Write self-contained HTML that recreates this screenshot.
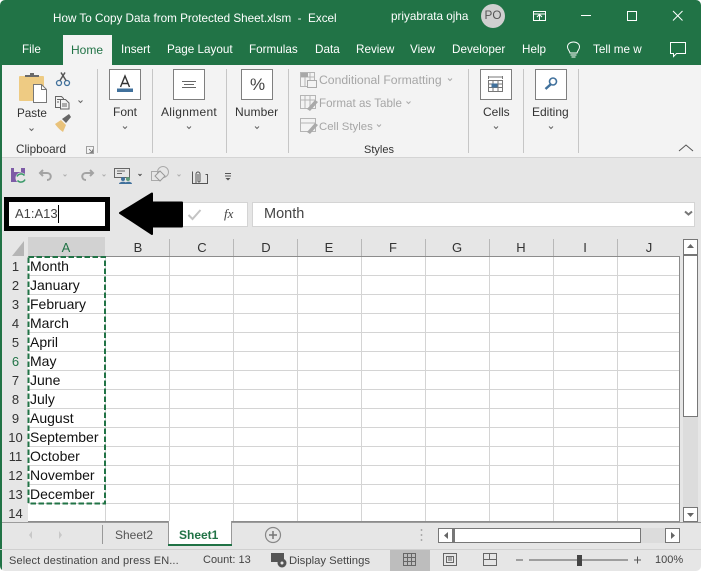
<!DOCTYPE html>
<html><head><meta charset="utf-8"><style>
html,body{margin:0;padding:0;background:#fff}
#p{position:relative;width:701px;height:571px;overflow:hidden;background:#e6e6e6;font-family:"Liberation Sans",sans-serif;color:#333}
#p div{position:absolute}
.t{position:absolute;white-space:nowrap;line-height:16px;font-size:11.7px}
.w{color:#fff}.g{color:#a6a6a6}
.c{text-align:center;transform:translateX(-50%)}
.box{background:#fff;border:1px solid #7f7f7f;box-sizing:border-box;width:32px;height:31px}
.sep{background:#c6c6c6;width:1px;top:69px;height:84px}
svg{position:absolute;overflow:visible}
.r{left:4px;width:23px;text-align:center;font-size:13px;color:#333;line-height:19px}
.n{left:30px;font-size:14px;color:#111;line-height:19px}
.h{font-size:13px;line-height:19px;color:#333;top:238px}
</style></head><body><div id="p">
<div style="left:0;top:0;width:701px;height:65px;background:#217346"></div>
<div style="left:0;top:65px;width:701px;height:92px;background:#f3f3f3"></div>
<div style="left:0;top:157px;width:701px;height:1px;background:#d4d4d4"></div>
<div style="left:0;top:0;width:2px;height:571px;background:#217346"></div>
<div style="left:63px;top:35px;width:49px;height:31px;background:#f3f3f3"></div>

<span class="t w" style="left:53px;top:11px">How To Copy Data from Protected Sheet.xlsm&nbsp; -&nbsp; Excel</span>
<span class="t w" style="left:391px;top:9px">priyabrata ojha</span>
<div style="left:481px;top:4px;width:24px;height:24px;border-radius:50%;background:#d0d0d0"></div>
<span class="t c" style="left:493px;top:8px;color:#555">PO</span>
<svg style="left:0;top:0" width="701" height="65" fill="none" stroke="#fff" stroke-width="1">
<path d="M533.500 11.500h12v9h-12zM533.500 14h12M539.500 20v-5M537 17l2.500-2.500 2.500 2.500"/>
<path d="M581 15.500h10"/><path d="M627.500 11.500h9v9h-9z"/><path d="M673 11l9.500 9.500M682.500 11L673 20.500"/>
<path d="M567.500 47c0-3 2.500-5 6-5s6 2 6 5c0 2.500-2 3.500-2.500 6h-7c-.5-2.500-2.500-3.500-2.500-6zM570.500 55h6M571.500 57h4"/>
<path d="M670.500 42.500h15v11h-9l-3 3v-3h-3z"/>
</svg>
<span class="t w" style="left:22px;top:42px">File</span>
<span class="t" style="left:71px;top:42px;color:#217346;font-size:12px">Home</span>
<span class="t w" style="left:121px;top:42px">Insert</span>
<span class="t w" style="left:167px;top:42px">Page Layout</span>
<span class="t w" style="left:249px;top:42px">Formulas</span>
<span class="t w" style="left:315px;top:42px">Data</span>
<span class="t w" style="left:356px;top:42px">Review</span>
<span class="t w" style="left:410px;top:42px">View</span>
<span class="t w" style="left:452px;top:42px">Developer</span>
<span class="t w" style="left:522px;top:42px">Help</span>
<span class="t w" style="left:593px;top:42px">Tell me w</span>

<div class="sep" style="left:97px"></div><div class="sep" style="left:152px"></div><div class="sep" style="left:226px"></div><div class="sep" style="left:288px"></div><div class="sep" style="left:468px"></div><div class="sep" style="left:523px"></div><div class="sep" style="left:578px"></div>
<div class="box" style="left:109px;top:69px"></div><div class="box" style="left:173px;top:69px"></div><div class="box" style="left:241px;top:69px"></div><div class="box" style="left:480px;top:69px"></div><div class="box" style="left:535px;top:69px"></div>

<svg style="left:0;top:0" width="701" height="160" fill="none">
<!-- paste -->
<rect x="19" y="76" width="25" height="25" rx="1" fill="#eecb83"/>
<path d="M25 77v-2h5v-2h4v2h5v2z" fill="#6a6a6a"/>
<path d="M33.500 84.500h8l5 5v13h-13z" fill="#fff" stroke="#777"/>
<path d="M41.500 84.500v5h5" stroke="#777"/>
<!-- scissors -->
<circle cx="59" cy="83" r="2.500" stroke="#41719c" stroke-width="1.300"/><circle cx="67" cy="83" r="2.500" stroke="#41719c" stroke-width="1.300"/>
<path d="M60 80.500l5-8M66 80.500l-5-8" stroke="#555" stroke-width="1.500"/>
<!-- copy -->
<path d="M55.500 96.500h6l2 2v9h-8z" stroke="#666" fill="#f3f3f3"/>
<path d="M60.500 99.500h5l3.500 3.500v6h-8.500z" stroke="#666" fill="#f3f3f3"/>
<path d="M57 99.500h3M57 102h2M62 104h5M62 106h5" stroke="#666"/>
<path d="M78.500 100.500l2 2 2-2M29.500 128.500l2 2 2-2M123 126.500l2 2 2-2M187 126.500l2 2 2-2M255 126.500l2 2 2-2M494 126.500l2 2 2-2M549 126.500l2 2 2-2" stroke="#666"/>
<!-- brush -->
<path d="M55 124l6-4 5 5-3 7c-3-2-6-5-8-8z" fill="#e9c27a"/><path d="M62 119l7-5 2 3-5 6z" fill="#666"/>
<!-- launcher -->
<path d="M86.500 146.500h7v7h-7z" stroke="#888" stroke-width=".8"/><path d="M89 149l3.500 3.500M92.500 149.500v3h-3" stroke="#666" stroke-width=".8"/>
<!-- font A -->
<path d="M117 88.500h16v3.500h-16z" fill="#41719c"/>
<path d="M120.500 87l4.500-11 4.500 11M122 83.500h6" stroke="#333" stroke-width="1.400"/>
<!-- alignment -->
<path d="M182 81.500h14M184 84.500h10M182 87.500h14" stroke="#666"/>
<!-- cells -->
<path d="M488.500 80.500h14v11h-14zM488.500 84h14M488.500 87.500h14M493 80.500v11M498 80.500v11M488.500 77h14M488.500 76v3M502.500 76v3" stroke="#777"/>
<rect x="491.500" y="83.500" width="6" height="4" fill="#41719c"/>
<!-- magnifier -->
<circle cx="553" cy="81.500" r="3.500" stroke="#41719c" stroke-width="1.600"/>
<path d="M550.500 84.500l-5 4.500" stroke="#41719c" stroke-width="2.500"/>
<!-- styles -->
<g stroke="#b5b5b5"><path d="M300.500 72.500h14v14h-14zM300.500 77h14M305 72.500v14M310 72.500v14"/><path d="M300.500 95.500h15v13h-15zM300.500 100h15M305 95.500v13M310 95.500v13"/><path d="M300.500 118.500h15v13h-15zM300.500 123h15"/></g>
<rect x="301" y="73" width="7" height="4" fill="#a8a8a8"/><rect x="307.500" y="80.500" width="9" height="7" fill="#f3f3f3" stroke="#aaa"/>
<path d="M307 109l8-9 3 2-8 9zM307 132l8-9 3 2-8 9z" fill="#aaa"/>
<path d="M448 78.500l2 2 2-2M406.500 101.500l2 2 2-2M377 124.500l2 2 2-2" stroke="#aaa"/>
<path d="M679 151l7-6 7 6" stroke="#555"/>
<!-- QAT -->
<rect x="11" y="168" width="14" height="14" fill="#7d5ba6"/><rect x="14" y="168" width="7" height="4" fill="#e6e6e6"/>
<circle cx="21" cy="178" r="5.500" fill="#e6e6e6"/><path d="M17 176.500a4.500 4.500 0 0 1 7.500-1M25 179.500a4.500 4.500 0 0 1-7.500 1" stroke="#3c9a6a" stroke-width="1.500"/>
<path d="M43 170l-3 3 3 3M40 173h7c5 0 5 7 0 7" stroke="#a3a3a3" stroke-width="2"/>
<path d="M90 170l3 3-3 3M93 173h-7c-5 0-5 7 0 7" stroke="#a3a3a3" stroke-width="2"/>
<path d="M63.500 174.500l1.500 1.500 1.500-1.500M102.500 174.500l1.500 1.500 1.500-1.500M177.500 174.500l1.500 1.500 1.500-1.500" stroke="#b0b0b0"/>
<path d="M138.500 174l1.500 1.500 1.500-1.500" stroke="#444"/>
<path d="M114.500 168.500h15v9h-15zM117 171h8M117 173.500h5" stroke="#666"/>
<circle cx="123" cy="179" r="2" fill="#41719c"/><circle cx="128" cy="179" r="2" fill="#5c9a78"/><path d="M119 184c0-3 8-3 8 0zM125 184c0-3 7-3 7 0z" fill="#41719c"/>
<path d="M151.500 171.500h9v9h-9z" stroke="#aaa"/><circle cx="163" cy="172" r="5.500" stroke="#aaa"/><path d="M160 171l5 5-5 5-5-5z" fill="#e6e6e6" stroke="#999"/>
<path d="M192.500 171.500v12h15v-9h-2M196 183v-9a2 2 0 0 1 4 0v7a1 1 0 0 1-2 0v-7" stroke="#555"/>
<path d="M225 173.500h6M225 176h6" stroke="#555"/><path d="M225.500 178l2.500 2.500 2.500-2.500z" fill="#555"/>
</svg>

<span class="t" style="left:17px;top:106px">Paste</span>
<span class="t" style="left:16px;top:142px">Clipboard</span>
<span class="t" style="left:113px;top:104px;font-size:12px">Font</span>
<span class="t" style="left:161px;top:104px;font-size:12px;letter-spacing:.3px">Alignment</span>
<span class="t" style="left:235px;top:104px;font-size:12px;letter-spacing:.1px">Number</span>
<span class="t" style="left:483px;top:104px;font-size:12px">Cells</span>
<span class="t" style="left:532px;top:104px;font-size:12px">Editing</span>
<span class="t" style="left:364px;top:142px;font-size:11px">Styles</span>
<span class="t" style="left:250px;top:76px;font-size:17px;line-height:18px;color:#444">%</span>
<span class="t g" style="left:319px;top:72px;font-size:12.2px">Conditional Formatting</span>
<span class="t g" style="left:319px;top:96px;font-size:11.6px">Format as Table</span>
<span class="t g" style="left:319px;top:119px;font-size:11.4px">Cell Styles</span>

<!-- formula bar -->
<div style="left:4px;top:197px;width:106px;height:34px;background:#000"></div>
<div style="left:9px;top:202px;width:96px;height:24px;background:#fff"></div>
<span class="t" style="left:15px;top:206px;font-size:13px;color:#444">A1:A13</span>
<div style="left:58px;top:205px;width:1px;height:18px;background:#000"></div>
<div style="left:150px;top:202px;width:98px;height:25px;background:#fff;border:1px solid #d4d4d4;box-sizing:border-box"></div>
<div style="left:252px;top:202px;width:443px;height:25px;background:#fff;border:1px solid #d4d4d4;box-sizing:border-box"></div>
<span class="t" style="left:264px;top:206px;font-size:14.500px;color:#444">Month</span>
<span class="t" style="left:224px;top:206px;font-family:'Liberation Serif',serif;font-style:italic;font-size:13px;color:#444">fx</span>
<svg style="left:0;top:190px" width="701" height="50" fill="none">
<path d="M120 23L152 3.500v9h30v24h-30v7.500z" fill="#000" stroke="#000" stroke-width="2" stroke-linejoin="round"/>
<path d="M188.500 25l4 4 8-9" stroke="#c4c4c4" stroke-width="2"/>
<path d="M685 21.500l3.500 3 3.500-3" stroke="#777" stroke-width="2"/>
</svg>

<!-- headers -->
<div style="left:28px;top:237px;width:77px;height:19px;background:#d2d2d2"></div>
<div style="left:4px;top:256px;width:24px;height:266px;background:#e6e6e6"></div>
<svg style="left:0;top:237px" width="701" height="290" fill="none">
<path d="M24 4v15H12z" fill="#b5b5b5"/>
<rect x="28" y="19.500" width="652" height="265" fill="#fff"/>
<path d="M105.500 20v265M169.500 20v265M233.500 20v265M297.500 20v265M361.500 20v265M425.500 20v265M489.500 20v265M553.500 20v265M617.500 20v265" stroke="#d4d4d4"/>
<path d="M28 38.500h652M28 57.500h652M28 76.500h652M28 95.500h652M28 114.500h652M28 133.500h652M28 152.500h652M28 171.500h652M28 190.500h652M28 209.500h652M28 228.500h652M28 247.500h652M28 266.500h652" stroke="#d4d4d4"/>
<path d="M169.500 2v17M233.500 2v17M297.500 2v17M361.500 2v17M425.500 2v17M489.500 2v17M553.500 2v17M617.500 2v17" stroke="#b8b8b8"/>
<path d="M28 19.500h652M679.500 19v266M28 284.500h652" stroke="#8c8c8c"/>
<path d="M28.500 20h76.500v246.500h-76.500z" stroke="#217346" stroke-width="2" stroke-dasharray="5.500 2.500"/>
</svg>
<span class="t h c" style="left:66px;color:#217346">A</span><span class="t h c" style="left:138px">B</span><span class="t h c" style="left:202px">C</span><span class="t h c" style="left:266px">D</span><span class="t h c" style="left:329px">E</span><span class="t h c" style="left:393px">F</span><span class="t h c" style="left:457px">G</span><span class="t h c" style="left:521px">H</span><span class="t h c" style="left:585px">I</span><span class="t h c" style="left:649px">J</span>

<span class="t r" style="top:257px">1</span><span class="t r" style="top:276px">2</span><span class="t r" style="top:295px">3</span><span class="t r" style="top:314px">4</span><span class="t r" style="top:333px">5</span><span class="t r" style="top:352px;color:#217346">6</span><span class="t r" style="top:371px">7</span><span class="t r" style="top:390px">8</span><span class="t r" style="top:409px">9</span><span class="t r" style="top:428px">10</span><span class="t r" style="top:447px">11</span><span class="t r" style="top:466px">12</span><span class="t r" style="top:485px">13</span><span class="t r" style="top:504px">14</span>
<span class="t n" style="top:257px">Month</span><span class="t n" style="top:276px">January</span><span class="t n" style="top:295px">February</span><span class="t n" style="top:314px">March</span><span class="t n" style="top:333px">April</span><span class="t n" style="top:352px">May</span><span class="t n" style="top:371px">June</span><span class="t n" style="top:390px">July</span><span class="t n" style="top:409px">August</span><span class="t n" style="top:428px">September</span><span class="t n" style="top:447px">October</span><span class="t n" style="top:466px">November</span><span class="t n" style="top:485px">December</span>

<!-- vertical scrollbar -->
<div style="left:683px;top:239px;width:15px;height:283px;background:#dcdcdc"></div>
<div style="left:683px;top:239px;width:15px;height:16px;background:#fff;border:1px solid #777;box-sizing:border-box"></div>
<div style="left:683px;top:255px;width:15px;height:162px;background:#fff;border:1px solid #777;box-sizing:border-box"></div>
<div style="left:683px;top:507px;width:15px;height:15px;background:#fff;border:1px solid #777;box-sizing:border-box"></div>
<svg style="left:0;top:0" width="701" height="571" fill="none">
<path d="M687 248l3.500-4 3.500 4zM687 513h7l-3.500 4z" fill="#666"/>
<path d="M32 531l-3 4 3 4zM59 531l3 4-3 4z" fill="#c8c8c8"/>
<path d="M102.500 525v19" stroke="#999"/>
<path d="M421.500 529v2M421.500 534v2M421.500 539v2" stroke="#aaa" stroke-width="1.500"/>
<circle cx="273" cy="535" r="7.500" stroke="#888" stroke-width="1.200"/><path d="M269 535h8M273 531v8" stroke="#777" stroke-width="1.500"/>
</svg>
<div style="left:2px;top:522px;width:699px;height:1px;background:#9c9c9c"></div>
<!-- sheet tabs -->
<div style="left:168px;top:521px;width:64px;height:25px;background:#fff;border-left:1px solid #999;border-right:1px solid #999;box-sizing:border-box"></div>
<div style="left:168px;top:544px;width:64px;height:2px;background:#217346"></div>
<span class="t" style="left:115px;top:527px;color:#555;font-size:12px">Sheet2</span>
<span class="t" style="left:179px;top:527px;color:#217346;font-weight:bold;font-size:12px">Sheet1</span>
<!-- h scroll -->
<div style="left:438px;top:528px;width:242px;height:15px;background:#dcdcdc"></div>
<div style="left:438px;top:528px;width:15px;height:15px;background:#fff;border:1px solid #777;box-sizing:border-box"></div>
<div style="left:453px;top:528px;width:188px;height:15px;background:#fff;border:1px solid #777;border-left-width:2px;box-sizing:border-box"></div>
<div style="left:665px;top:528px;width:15px;height:15px;background:#fff;border:1px solid #777;box-sizing:border-box"></div>
<svg style="left:0;top:0" width="701" height="571"><path d="M448 532v7l-4-3.500zM671 532v7l4-3.500z" fill="#666"/></svg>
<!-- status -->
<div style="left:0;top:549px;width:701px;height:1px;background:#d0d0d0"></div>
<span class="t" style="left:9px;top:553px;font-size:11px;letter-spacing:.12px;color:#444">Select destination and press EN...</span>
<span class="t" style="left:203px;top:552px;font-size:11px;color:#444">Count: 13</span>
<span class="t" style="left:289px;top:553px;font-size:11.300px;color:#444">Display Settings</span>
<div style="left:390px;top:550px;width:40px;height:21px;background:#bdbdbd"></div>
<span class="t" style="left:655px;top:552px;font-size:11px;color:#444">100%</span>
<svg style="left:0;top:0" width="701" height="571" fill="none">
<rect x="271" y="553" width="13" height="9" fill="#555"/><circle cx="282" cy="563" r="4.500" fill="#555"/><circle cx="282" cy="563" r="1.500" fill="#e6e6e6"/>
<path d="M403.500 553.500h12v12h-12zM403.500 557.500h12M403.500 561.500h12M407.500 553.500v12M411.500 553.500v12" stroke="#666"/>
<path d="M443.500 553.500h13v12h-13zM446.500 556.500h7v6h-7zM448 558h4M448 560h4" stroke="#666"/>
<path d="M483.500 553.500h13v12h-13zM489.500 553.500v6M483.500 553.500v6h13M496.500 553.500v6" stroke="#666"/>
<path d="M516 560h7M529 560h99M634 560h7M637.500 556.500v7" stroke="#555"/>
<rect x="577" y="555" width="5" height="11" fill="#444"/>
</svg>
<!-- corners -->
<svg style="left:0;top:0" width="701" height="571"><path d="M0 0h5a5 5 0 0 0-5 5zM701 0h-5a5 5 0 0 1 5 5zM0 571v-5a5 5 0 0 0 5 5zM701 571h-5a5 5 0 0 0 5-5z" fill="#fff"/></svg>
</div></body></html>
